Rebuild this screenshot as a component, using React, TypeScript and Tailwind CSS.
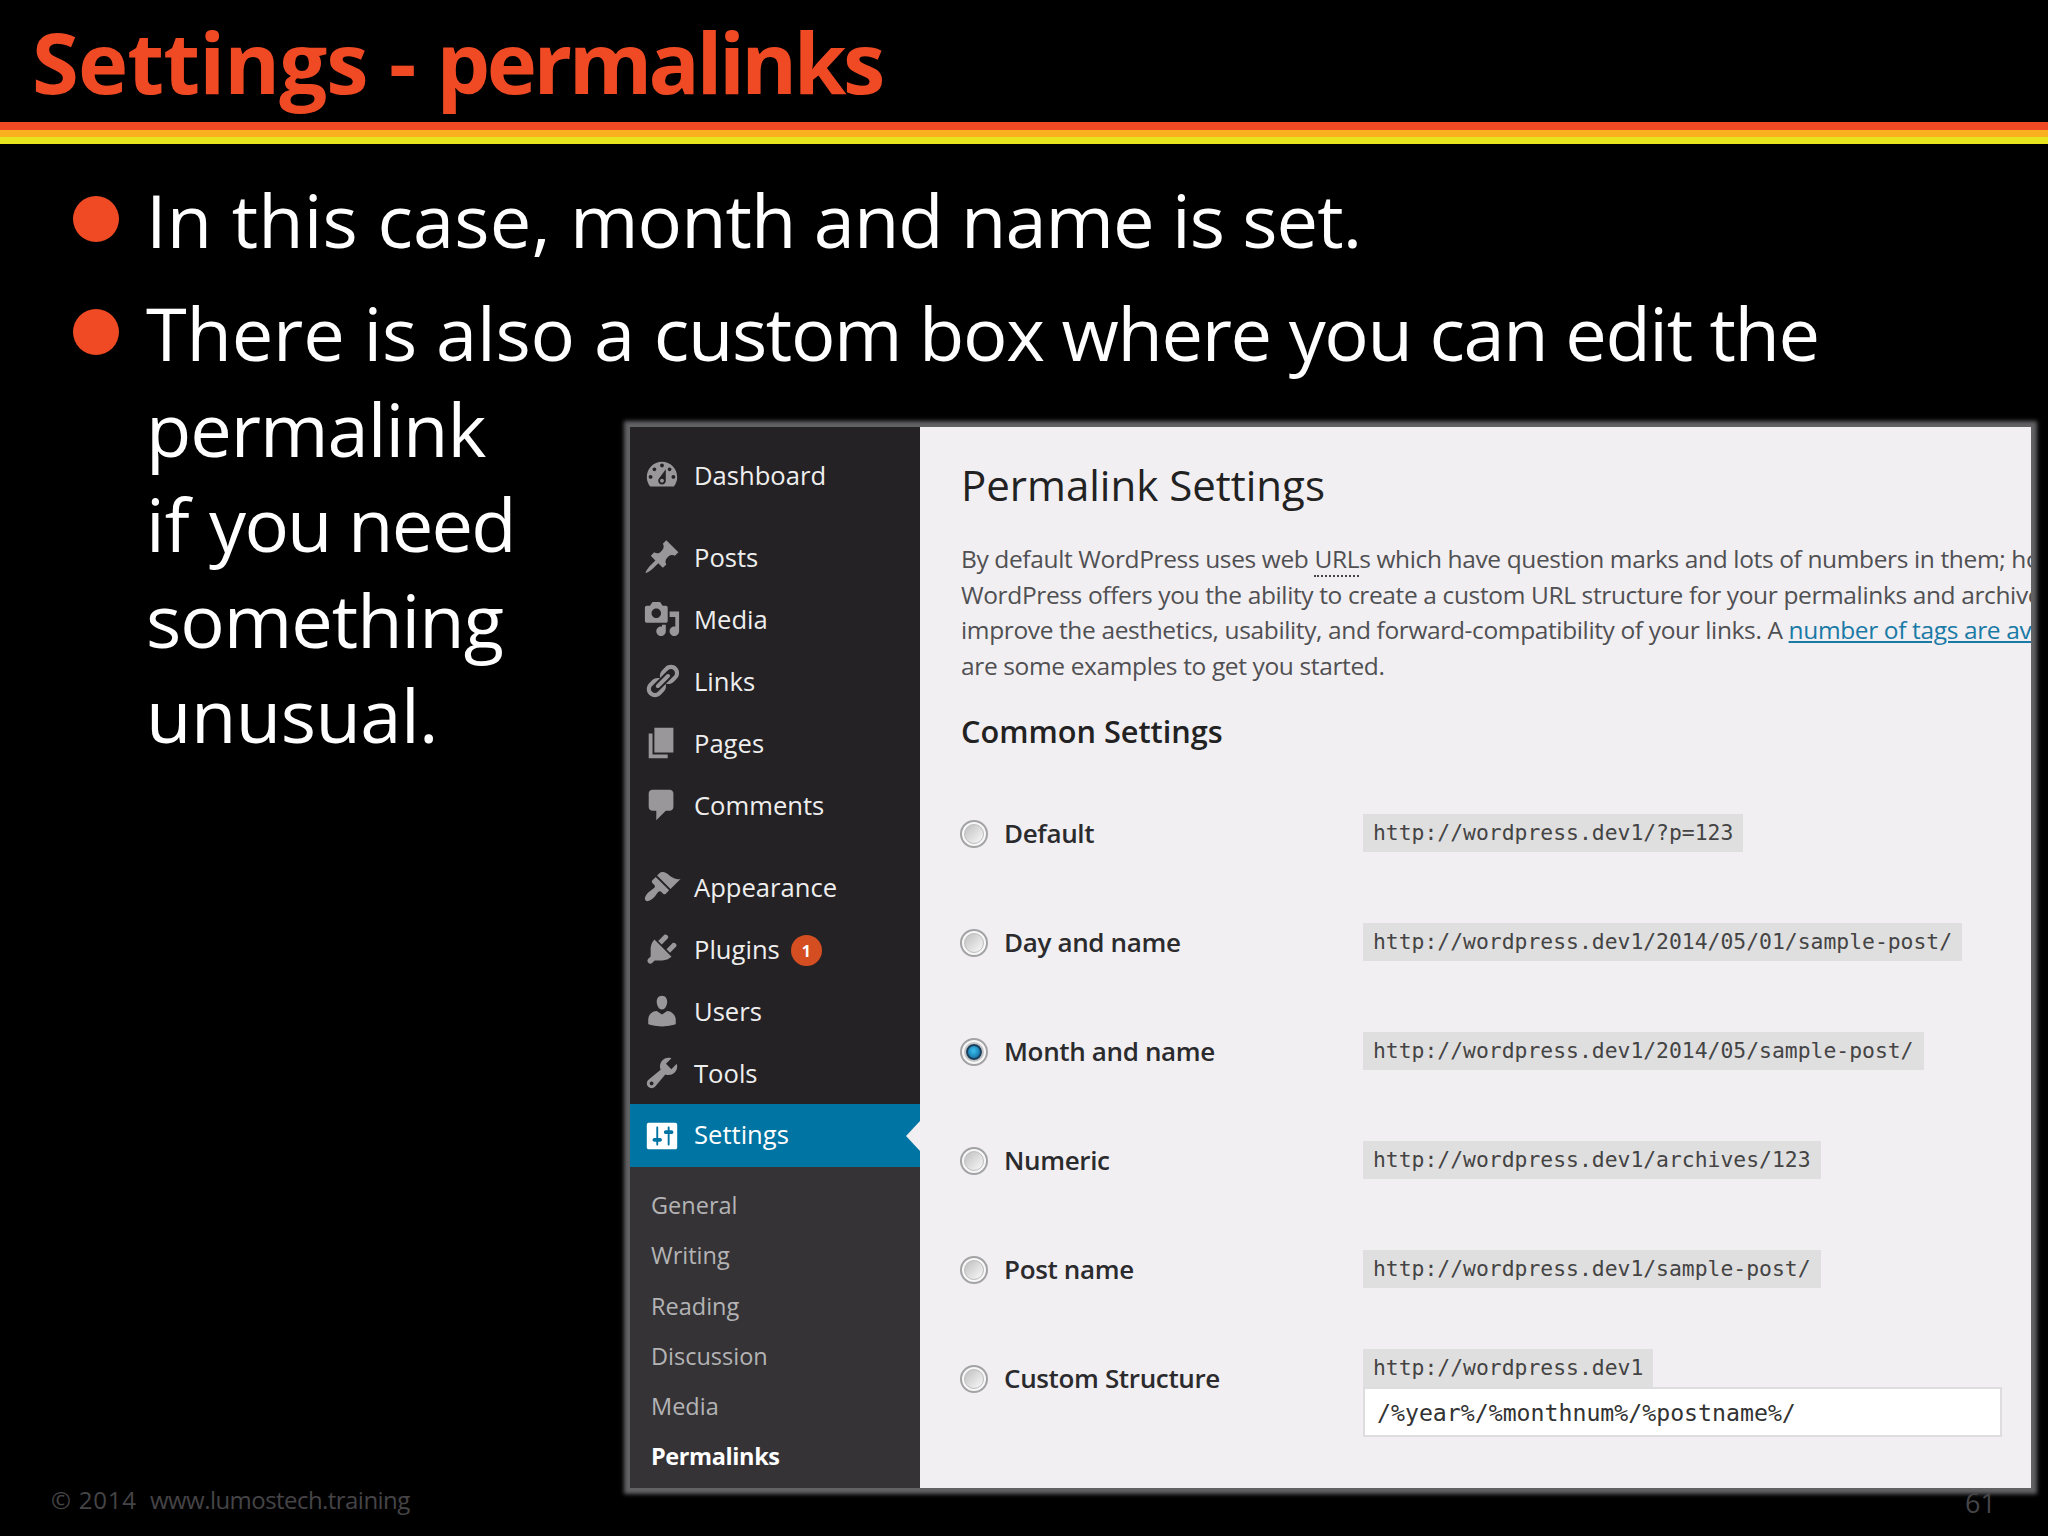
import React from 'react';

interface MenuItem {
  label: string;
  icon: string;
  badge?: number;
}

const ICONS: Record<string, string> = {
  dashboard:
    'M3.76 16h12.48c1.1-1.37 1.76-3.11 1.76-5 0-4.42-3.58-8-8-8s-8 3.58-8 8c0 1.89.66 3.63 1.76 5zM10 4c.55 0 1 .45 1 1s-.45 1-1 1-1-.45-1-1 .45-1 1-1zM6 6c.55 0 1 .45 1 1s-.45 1-1 1-1-.45-1-1 .45-1 1-1zm8 0c.55 0 1 .45 1 1s-.45 1-1 1-1-.45-1-1 .45-1 1-1zm-5.37 5.55L12 7v6c0 1.1-.9 2-2 2s-2-.9-2-2c0-.57.24-1.08.63-1.45zM4 10c.55 0 1 .45 1 1s-.45 1-1 1-1-.45-1-1 .45-1 1-1zm12 0c.55 0 1 .45 1 1s-.45 1-1 1-1-.45-1-1 .45-1 1-1zm-5 3c0-.55-.45-1-1-1s-1 .45-1 1 .45 1 1 1 1-.45 1-1z',
  post: 'M10.44 3.02l1.82-1.82 6.36 6.35-1.83 1.82c-1.05-.68-2.48-.57-3.41.36l-.75.75c-.92.93-1.04 2.35-.35 3.41l-1.83 1.82-2.41-2.41-2.8 2.79c-.42.42-3.38 2.71-3.8 2.29s1.86-3.39 2.28-3.81l2.79-2.79L4.1 9.36l1.83-1.82c1.05.69 2.48.57 3.4-.36l.75-.75c.93-.92 1.05-2.35.36-3.41z',
  media:
    'M13 11V4c0-.55-.45-1-1-1h-1.67L9 1H5L3.67 3H2c-.55 0-1 .45-1 1v7c0 .55.45 1 1 1h10c.55 0 1-.45 1-1zM7 4.5c1.38 0 2.5 1.12 2.5 2.5S8.38 9.5 7 9.5 4.5 8.38 4.5 7 5.62 4.5 7 4.5zM14 6h5v10.5c0 1.38-1.12 2.5-2.5 2.5S14 17.88 14 16.5s1.12-2.5 2.5-2.5c.17 0 .34.02.5.05V9h-3V6zm-4 8.05V13h2v3.5c0 1.38-1.12 2.5-2.5 2.5S7 17.88 7 16.5 8.12 14 9.5 14c.17 0 .34.02.5.05z',
  links:
    'M17.74 2.76c1.68 1.69 1.68 4.41 0 6.1l-1.53 1.52c-1.12 1.12-2.7 1.47-4.14 1.09l2.62-2.61.76-.77.76-.76c.84-.84.84-2.2 0-3.04-.84-.85-2.2-.85-3.04 0l-.77.76-3.38 3.38c-.37-1.44-.02-3.02 1.1-4.14l1.52-1.53c1.69-1.68 4.42-1.68 6.1 0zM8.59 13.43l5.34-5.34c.42-.42.42-1.1 0-1.52-.44-.43-1.13-.39-1.53 0l-5.33 5.34c-.42.42-.42 1.1 0 1.52.44.43 1.13.39 1.52 0zm-.76 2.29l4.14-4.15c.38 1.44.03 3.02-1.09 4.14l-1.52 1.53c-1.69 1.68-4.41 1.68-6.1 0-1.68-1.68-1.68-4.42 0-6.1l1.53-1.52c1.12-1.12 2.7-1.47 4.14-1.1l-4.14 4.15c-.85.84-.85 2.2 0 3.05.84.84 2.2.84 3.04 0z',
  page: 'M6 15V2h10v13H6zm-1 1h8v2H3V5h2v11z',
  comments: 'M5 2h9c1.1 0 2 .9 2 2v7c0 1.1-.9 2-2 2h-2l-5 5v-5H5c-1.1 0-2-.9-2-2V4c0-1.1.9-2 2-2z',
  appearance:
    'M14.48 11.06L7.41 3.99l1.5-1.5c.5-.56 2.3-.47 3.51.32 1.21.8 1.43 1.28 2.91 2.1 1.18.64 2.45 1.26 4.45.85zm-.71.71L6.7 4.7 4.93 6.47c-.39.39-.39 1.02 0 1.41l1.06 1.06c.39.39.39 1.03 0 1.42-.6.6-1.43 1.11-2.21 1.69-.35.26-.7.53-1.01.84C1.43 14.23.4 16.08 1.4 17.07c.99 1 2.84-.03 4.18-1.36.31-.31.58-.66.85-1.02.57-.78 1.08-1.61 1.69-2.21.39-.39 1.02-.39 1.41 0l1.06 1.06c.39.39 1.02.39 1.41 0z',
  plugins:
    'M13.11 4.36L9.87 7.6 8 5.73l3.24-3.24c.35-.34 1.05-.2 1.56.32.52.51.66 1.21.31 1.55zm-8 1.77l.91-1.12 9.01 9.01-1.19.84c-.71.71-2.63 1.16-3.82 1.16H6.14L4.9 17.26c-.59.59-1.54.59-2.12 0-.59-.58-.59-1.53 0-2.12l1.24-1.24v-3.88c0-1.13.4-3.19 1.09-3.89zm7.26 3.97l3.24-3.24c.34-.35 1.04-.21 1.55.31.52.51.66 1.21.31 1.55l-3.24 3.25z',
  users:
    'M10 9.25c-2.27 0-2.73-3.44-2.73-3.44C7 4.02 7.82 2 9.97 2c2.16 0 2.98 2.02 2.71 3.81 0 0-.41 3.44-2.68 3.44zm0 2.57L12.72 10c2.39 0 4.52 2.33 4.52 4.53v2.49s-3.65 1.13-7.24 1.13c-3.65 0-7.24-1.13-7.24-1.13v-2.49c0-2.25 1.94-4.48 4.47-4.48z',
  tools:
    'M16.68 9.77c-1.34 1.34-3.3 1.67-4.95.99l-5.41 6.52c-.99.99-2.59.99-3.58 0s-.99-2.59 0-3.57l6.52-5.42c-.68-1.65-.35-3.61.99-4.95 1.28-1.28 3.12-1.62 4.72-1.06l-2.89 2.89 2.82 2.82 2.86-2.87c.53 1.58.18 3.39-1.08 4.65zM3.81 16.21c.4.39 1.04.39 1.43 0 .4-.4.4-1.04 0-1.43-.39-.4-1.03-.4-1.43 0-.39.39-.39 1.03 0 1.43z',
  settings:
    'M18 16V4c0-.55-.45-1-1-1H3c-.55 0-1 .45-1 1v12c0 .55.45 1 1 1h14c.55 0 1-.45 1-1zM8 11h1c.55 0 1 .45 1 1s-.45 1-1 1H8v1.5c0 .28-.22.5-.5.5s-.5-.22-.5-.5V13H6c-.55 0-1-.45-1-1s.45-1 1-1h1V5.5c0-.28.22-.5.5-.5s.5.22.5.5V11zm5-2h-1c-.55 0-1-.45-1-1s.45-1 1-1h1V5.5c0-.28.22-.5.5-.5s.5.22.5.5V7h1c.55 0 1 .45 1 1s-.45 1-1 1h-1v5.5c0 .28-.22.5-.5.5s-.5-.22-.5-.5V9z',
};

const MENU_GROUPS: MenuItem[][] = [
  [{ label: 'Dashboard', icon: 'dashboard' }],
  [
    { label: 'Posts', icon: 'post' },
    { label: 'Media', icon: 'media' },
    { label: 'Links', icon: 'links' },
    { label: 'Pages', icon: 'page' },
    { label: 'Comments', icon: 'comments' },
  ],
  [
    { label: 'Appearance', icon: 'appearance' },
    { label: 'Plugins', icon: 'plugins', badge: 1 },
    { label: 'Users', icon: 'users' },
    { label: 'Tools', icon: 'tools' },
  ],
];

const SUBMENU = ['General', 'Writing', 'Reading', 'Discussion', 'Media', 'Permalinks'];

const OPTIONS = [
  { label: 'Default', url: 'http://wordpress.dev1/?p=123' },
  { label: 'Day and name', url: 'http://wordpress.dev1/2014/05/01/sample-post/' },
  { label: 'Month and name', url: 'http://wordpress.dev1/2014/05/sample-post/' },
  { label: 'Numeric', url: 'http://wordpress.dev1/archives/123' },
  { label: 'Post name', url: 'http://wordpress.dev1/sample-post/' },
];

const DashIcon: React.FC<{ name: string; className: string }> = ({ name, className }) => (
  <svg viewBox="0 0 20 20" className={`h-[38px] w-[38px] shrink-0 ${className}`} fill="currentColor" fillRule="evenodd">
    <path d={ICONS[name]} />
  </svg>
);

const Bullet = () => <span className="mt-[24px] mr-[27px] h-[46px] w-[46px] shrink-0 rounded-full bg-[#f04a24]"></span>;

const Radio: React.FC<{ checked?: boolean }> = ({ checked }) => (
  <span className="-ml-px flex h-7 w-7 shrink-0 items-center justify-center rounded-full border-2 border-[#a3a2a4] bg-[#f7f7f7]">
    {checked ? (
      <span className="h-[16px] w-[16px] rounded-full border-2 border-[#1c3f5c] bg-radial-[at_45%_40%] from-[#3cc0f0] to-[#0b5f94] ring-2 ring-[#c4c4c6]"></span>
    ) : (
      <span className="h-5 w-5 rounded-full border border-[#bdbdbd] bg-linear-to-br from-[#bfbfbf] to-[#fafafa]"></span>
    )}
  </span>
);

const OptionLabel: React.FC<{ children: string }> = ({ children }) => (
  <span className="ml-[16px] w-[359px] text-[26px] font-semibold tracking-[-0.35px] text-[#2b2b2d]">{children}</span>
);

const UrlCode: React.FC<{ children: string }> = ({ children }) => (
  <code className="bg-[#e0dfe0] px-[10px] font-['DejaVu_Sans_Mono',monospace] text-[21.38px] leading-[38px] whitespace-nowrap text-[#444]">
    {children}
  </code>
);

const Sidebar = () => (
  <nav className="flex w-[290px] shrink-0 flex-col bg-[#242225] text-[25.6px]">
    <div className="flex shrink-0 flex-col gap-5 pt-[17px]">
      {MENU_GROUPS.map((group) => (
        <ul key={group[0].label}>
          {group.map((item) => (
            <li key={item.label} className="flex h-[62px] items-center pl-[13px] text-[#eee]">
              <DashIcon name={item.icon} className="text-[#999799]" />
              <span className="ml-[13px] pt-[3px]">{item.label}</span>
              {item.badge && (
                <span className="mt-[2px] ml-[11px] flex h-[31px] w-[31px] items-center justify-center rounded-full bg-[#d54e21] pt-[2px] text-[16px] font-bold text-white">
                  {item.badge}
                </span>
              )}
            </li>
          ))}
        </ul>
      ))}
    </div>
    <div className="relative flex h-[63px] shrink-0 items-center bg-[#0074a2] pl-[13px] text-white">
      <DashIcon name="settings" className="text-white" />
      <span className="ml-[13px]">Settings</span>
      <svg viewBox="0 0 14 30" className="absolute right-0 h-[30px] w-[14px] fill-[#f1eff2]">
        <path d="M14 0v30L0 15z" />
      </svg>
    </div>
    <ul className="flex-1 bg-[#353336] pt-[13px] pl-[21px] text-[23.5px] text-[#b4b3b5]">
      {SUBMENU.map((label) => (
        <li key={label} className="leading-[50.3px] last:font-bold last:tracking-[-0.4px] last:text-white">
          {label}
        </li>
      ))}
    </ul>
  </nav>
);

const PermalinkForm = () => (
  <main className="min-w-0 flex-1 overflow-hidden bg-[#f1eff2] pl-[41px] whitespace-nowrap text-[#222]">
    <h2 className="mt-[30px] text-[42px] leading-[56px]">Permalink Settings</h2>
    <p className="mt-[28px] text-[24.5px] leading-[35.5px] tracking-[-0.37px] text-[#505052]">
      By default WordPress uses web <span className="border-b-2 border-dotted border-[#444]">URL</span>s which have
      question marks and lots of numbers in them; how
      <br />
      WordPress offers you the ability to create a custom URL structure for your permalinks and archive
      <br />
      improve the aesthetics, usability, and forward-compatibility of your links. A{' '}
      <a className="text-[#1a7aa6] underline decoration-2 underline-offset-2">number of tags are ava</a>
      <br />
      are some examples to get you started.
    </p>
    <h3 className="mt-[28px] text-[30.7px] leading-[40px] font-semibold">Common Settings</h3>
    <div className="mt-[28px]">
      {OPTIONS.map((option) => (
        <label key={option.label} className="flex h-[109px] items-center">
          <Radio checked={option.label === 'Month and name'} />
          <OptionLabel>{option.label}</OptionLabel>
          <span className="mb-px flex">
            <UrlCode>{option.url}</UrlCode>
          </span>
        </label>
      ))}
      <div className="flex h-[109px] items-center">
        <Radio />
        <OptionLabel>Custom Structure</OptionLabel>
        <div className="flex flex-col items-start pt-[28px]">
          <UrlCode>http://wordpress.dev1</UrlCode>
          <input
            className="h-[50px] w-[639px] border-2 border-[#dddcde] bg-white px-[12px] pt-[2px] font-['DejaVu_Sans_Mono',monospace] text-[23.2px] text-[#333]"
            defaultValue="/%year%/%monthnum%/%postname%/"
          />
        </div>
      </div>
    </div>
  </main>
);

const App = () => (
  <div className="relative flex h-[1536px] w-[2048px] flex-col overflow-hidden bg-black font-['Open_Sans',sans-serif]">
    <header className="pl-[32px]">
      <h1 className="text-[85px] leading-[122px] font-bold tracking-[-0.9px] whitespace-nowrap text-[#f04a24]">
        Settings - <span className="tracking-[-3.5px]">permalinks</span>
      </h1>
    </header>
    <div className="h-2 shrink-0 bg-[#f04a24]"></div>
    <div className="h-[7px] shrink-0 bg-[#fbb01f]"></div>
    <div className="h-[7px] shrink-0 bg-[#e8e51f]"></div>

    <ul className="flex flex-col gap-[17.5px] pt-[28px] pl-[73px] text-[74px] leading-[95.5px] whitespace-nowrap text-white">
      <li className="flex">
        <Bullet />
        <div className="tracking-[-0.95px]">
          <span className="tracking-[0.15px]">In this case, </span>month and name is set.
        </div>
      </li>
      <li className="flex">
        <Bullet />
        <div className="tracking-[-1px]">
          <span className="tracking-[-0.2px]">There is also a </span>
          <span className="tracking-[-1.35px]">custom box where you can edit the</span>
          <br />
          permalink
          <br />
          <span className="tracking-[0.1px]">if </span>
          <span className="tracking-[-1.8px]">you need</span>
          <br />
          something
          <br />
          <span className="tracking-[-0.5px]">unusual.</span>
        </div>
      </li>
    </ul>

    <section className="absolute top-[427px] left-[630px] flex h-[1061px] w-[1401px] shadow-[0_0_4px_6px_#626164]">
      <Sidebar />
      <PermalinkForm />
    </section>

    <footer className="absolute right-[52px] bottom-[13px] left-[51px] flex items-end text-[24px] text-[#454447]">
      <span className="mb-[5px] w-[99px] tracking-[0.8px]">© 2014</span>
      <span className="mb-[5px] tracking-[-0.55px]">www.lumostech.training</span>
      <span className="ml-auto text-[27px]">61</span>
    </footer>
  </div>
);

export default App;
